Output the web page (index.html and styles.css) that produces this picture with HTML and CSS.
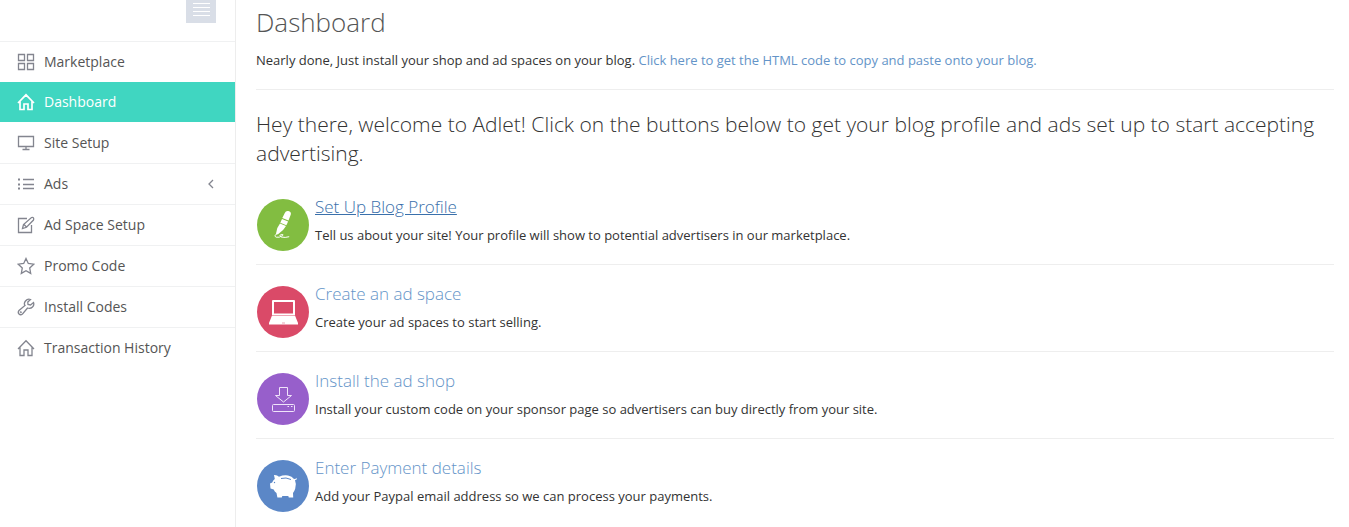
FILE: index.html
```
<!DOCTYPE html>
<html lang="en">
<head>
    <meta charset="UTF-8">
    <title>Dashboard</title>
    <link rel="stylesheet" href="styles.css">
</head>
<body>
<div class="page">
    <nav class="sidebar">
        <button class="toggler" type="button" aria-label="Toggle menu">
            <svg width="17" height="16" viewBox="0 0 17 16" stroke="#fff"><path d="M0 3.500h17M0 7.500h17M0 11.500h17M0 15.500h17"/></svg>
        </button>
        <ul class="menu">
            <li><a href="#">
                <svg class="icon" viewBox="0 0 18 18"><path d="M1.500 1.500h6v6h-6zM10.500 1.500h6v6h-6zM1.500 10.500h6v6h-6zM10.500 10.500h6v6h-6z"/></svg>
                <span>Marketplace</span></a></li>
            <li class="active"><a href="#">
                <svg class="icon" viewBox="0 0 18 18"><path d="M1 10 9 1.800l8 8.200M3 8.500v8h4v-5.500h4v5.500h4v-8"/></svg>
                <span>Dashboard</span></a></li>
            <li><a href="#">
                <svg class="icon" viewBox="0 0 18 18"><path d="M1.500 2.500h15v10h-15zM9 12.500v3M5.500 15.500h7"/></svg>
                <span>Site Setup</span></a></li>
            <li><a href="#">
                <svg class="icon" viewBox="0 0 18 18"><path d="M6 4.500h11M6 9.500h11M6 13.500h11"/><path stroke-width="2" d="M1 4.500h2M1 9.500h2M1 13.500h2"/></svg>
                <span>Ads</span>
                <svg class="arrow" viewBox="0 0 6 10"><path d="M5 1 1 5l4 4"/></svg></a></li>
            <li><a href="#">
                <svg class="icon" viewBox="0 0 18 18"><path d="M10 2.500H1.500v14h13V9M5.500 12.500l1-4 8-7q1.500-.5 2 .5t0 2L9.500 11.300zM7 8.500l2.500 2.500"/></svg>
                <span>Ad Space Setup</span></a></li>
            <li><a href="#">
                <svg class="icon" viewBox="0 0 18 18"><path d="m9 1.500 2.300 5 5.400.7-4 3.700 1 5.500L9 13.800l-4.700 2.600 1-5.500-4-3.700 5.400-.7z"/></svg>
                <span>Promo Code</span></a></li>
            <li><a href="#">
                <svg class="icon" viewBox="0 0 18 18"><path d="M13.500 1.500Q10.500.5 8.500 3T8 7.500l-6 5q-1.500 2 0 3.500t3.500 0l5-6q3 1 5-1t1-4.500L13.500 7 11 6.500 10.800 4z"/><circle cx="3.800" cy="14.200" r=".4"/></svg>
                <span>Install Codes</span></a></li>
            <li><a href="#">
                <svg class="icon" viewBox="0 0 18 18"><path d="M1 10 9 1.800l8 8.200M3 8.500v8h4v-5.500h4v5.500h4v-8"/></svg>
                <span>Transaction History</span></a></li>
        </ul>
    </nav>
    <main class="content">
        <h1>Dashboard</h1>
        <p class="notice">Nearly done, Just install your shop and ad spaces on your blog. <a href="#">Click here to get the HTML code to copy and paste onto your blog.</a></p>
        <p class="lead">Hey there, welcome to Adlet! Click on the buttons below to get your blog profile and ads set up to start accepting advertising.</p>
        <section class="step">
            <!-- pen -->
            <svg class="badge" viewBox="0 0 52 52">
                <circle cx="26" cy="26" r="26" fill="#82bd41"/>
                <g fill="#fff">
                    <path d="M27.800 14q1-2.500 3.500-2 3.200.8 2.500 3.500l-2.300 6-6.200-2.500z"/>
                    <path d="m25 19.900 6.100 2.500-1.700 3.800-6.100-2.500z"/>
                    <path d="m23 24.500 6 2.400q-2.500 4.800-8 8.300l-2 .3.300-2.200q.7-5 3.700-8.800z"/>
                </g>
                <path d="M20 34.500q-3.500 2.500-.8 3.700 3 .8 6.500-1.700 1.500-1-1.500-1-3 1 0 2.500 4 1 8-.3" fill="none" stroke="#fff"/>
            </svg>
            <div>
                <h2><a class="current" href="#">Set Up Blog Profile</a></h2>
                <p>Tell us about your site! Your profile will show to potential advertisers in our marketplace.</p>
            </div>
        </section>
        <section class="step">
            <!-- laptop -->
            <svg class="badge" viewBox="0 0 52 52">
                <circle cx="26" cy="26" r="26" fill="#da4a68"/>
                <path fill="#fff" fill-rule="evenodd" d="M16 14h21q1 0 1 1v14H15V15q0-1 1-1zm1 2v11.500h19V16z"/>
                <path fill="#fff" d="M15 29.500h23l3 7.500v1.500H12V37z"/>
                <path stroke="#da4a68" stroke-opacity=".5" d="M25 37h3"/>
            </svg>
            <div>
                <h2><a href="#">Create an ad space</a></h2>
                <p>Create your ad spaces to start selling.</p>
            </div>
        </section>
        <section class="step">
            <!-- download to drive -->
            <svg class="badge" viewBox="0 0 52 52">
                <circle cx="26" cy="26" r="26" fill="#975fcb"/>
                <g fill="none" stroke="#f0e4fa">
                    <path d="M22.500 14.500h8v8h4L26.500 29l-8-6.500h4z"/>
                    <rect x="15.500" y="31.500" width="22" height="7" rx="1"/>
                    <path d="M30.500 33.500h1.500M34 33.500h1.500"/>
                </g>
            </svg>
            <div>
                <h2><a href="#">Install the ad shop</a></h2>
                <p>Install your custom code on your sponsor page so advertisers can buy directly from your site.</p>
            </div>
        </section>
        <section class="step">
            <!-- piggy bank -->
            <svg class="badge" viewBox="0 0 52 52">
                <circle cx="26" cy="26" r="26" fill="#5b87c7"/>
                <path fill="#fff" d="M17 15q3-.3 5 1.800 4.500-2 9-1.300 4 .8 6 3.500l1.800-.2.500-1 .6 1.500-1.900 1q1.800 4 .2 8.500-1 3-2.200 4.200l.2 4.500h-4.400l-.5-1.500h-6l-.5 1.500h-4.400l-.9-4.500q-2-1.500-2.800-3.500l-3.200-1-.5-5 2.200-.9q.8-2.200 2.600-3.600z"/>
                <circle cx="17.500" cy="22.500" r=".7" fill="#5b87c7"/>
                <path d="M24 18.500q5-1.500 10 1" fill="none" stroke="#5b87c7"/>
            </svg>
            <div>
                <h2><a href="#">Enter Payment details</a></h2>
                <p>Add your Paypal email address so we can process your payments.</p>
            </div>
        </section>
    </main>
</div>
</body>
</html>
```
FILE: styles.css
```
* {
    margin: 0;
    padding: 0;
    box-sizing: border-box;
}

body {
    font-family: "Open Sans", "Liberation Sans", sans-serif;
    font-size: 13px;
    line-height: 20px;
    color: #333;
    background-color: #fff;
}

a {
    color: #6494c8;
    text-decoration: none;
}

.page {
    display: flex;
    min-height: 100vh;
}

.sidebar {
    width: 236px;
    flex: none;
    border-right: 1px solid #ededed;
}

.toggler {
    display: block;
    width: 30px;
    height: 23px;
    margin: 0 19px 18px auto;
    border: 0;
    background-color: #d9dee7;
    cursor: pointer;
}

.toggler svg {
    display: block;
    margin: 0 7px 7px;
}

.menu {
    list-style: none;
}

.menu li {
    border-top: 1px solid #f0f1f2;
}

.menu a {
    display: flex;
    align-items: center;
    gap: 9px;
    height: 40px;
    padding: 0 21px 0 17px;
    font-size: 14px;
    color: #555;
}

.menu .active {
    border-top: 0;
    background-color: #40d6c1;
}

.menu .active + li {
    border-top-color: transparent;
}

.menu .active a {
    color: #fff;
}

.icon,
.arrow {
    flex: none;
    fill: none;
    stroke: #83858f;
    stroke-width: 1.3;
}

.icon {
    width: 18px;
    height: 18px;
}

.active .icon {
    stroke: #fff;
    stroke-width: 1.7;
}

.arrow {
    width: 6px;
    height: 10px;
    margin-left: auto;
}

.content {
    flex: 1;
    padding: 0 15px 0 20px;
}

h1 {
    padding: 4px 0 10px;
    font-size: 26px;
    font-weight: 300;
    line-height: 36px;
    color: #555;
}

.notice {
    padding-bottom: 19px;
    border-bottom: 1px solid #eee;
}

.lead {
    padding: 20px 0;
    font-size: 21px;
    font-weight: 300;
    line-height: 29px;
}

.step {
    display: flex;
    gap: 6px;
    padding: 19px 0 13px;
    border-bottom: 1px solid #eee;
}

.lead + .step {
    padding-top: 9px;
}

.step:last-child {
    border-bottom: 0;
}

.badge {
    width: 52px;
    height: 52px;
    margin: 2px 0 0 1px;
    flex: none;
}

h2 {
    margin-bottom: 8px;
    font-size: 17px;
    font-weight: 300;
    line-height: 20px;
}

.current {
    color: #3a70ab;
    text-decoration: underline;
}
```
